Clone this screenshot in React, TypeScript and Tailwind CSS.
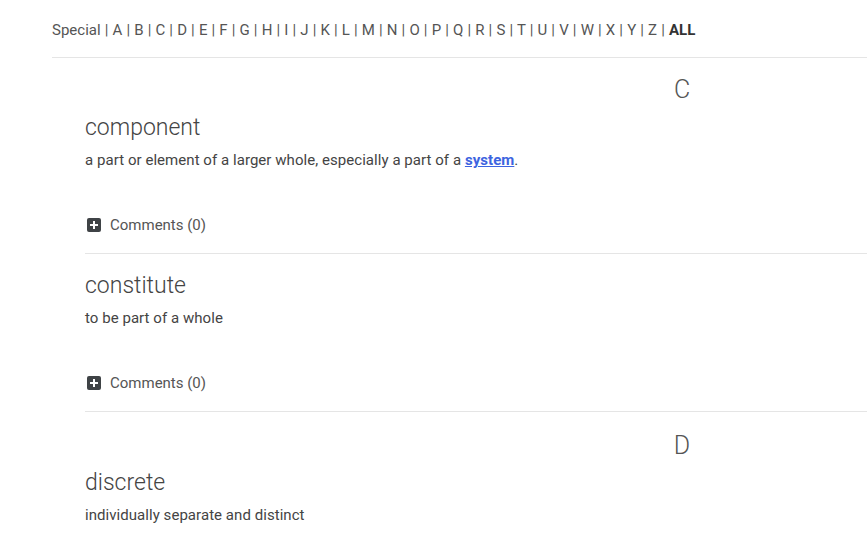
import { ReactNode } from 'react';

const letters = 'ABCDEFGHIJKLMNOPQRSTUVWXYZ'.split('');

function PlusBox() {
  return (
    <svg width="14" height="14" viewBox="0 0 14 14" className="shrink-0">
      <rect x="0" y="0" width="14" height="14" rx="2" fill="#3f4346" />
      <rect x="6" y="3" width="2" height="8" fill="#fff" />
      <rect x="3" y="6" width="8" height="2" fill="#fff" />
    </svg>
  );
}

function LetterHeading({ letter, pad }: { letter: string; pad: string }) {
  return (
    <div className={`${pad} text-center text-[25px] leading-[28px] font-light text-[#555]`}>
      {letter}
    </div>
  );
}

function Entry({ word, children, last, top }: { word: string; children: ReactNode; last?: boolean; top: string }) {
  return (
    <div className={last ? '' : 'border-b border-[#e5e5e5]'}>
      <h3 className={`${top} text-[23px] leading-[26px] font-light text-[#444]`}>{word}</h3>
      <p className="mt-[9px] text-[15px] leading-[20px] text-[#444] tracking-[0.05px]">{children}</p>
      {!last && (
        <div className="mt-[45px] mb-[18px] flex items-center gap-[9px] pl-[2px] text-[15px] leading-[20px] text-[#555]">
          <PlusBox />
          <span>Comments (0)</span>
        </div>
      )}
    </div>
  );
}

export default function App() {
  return (
    <div className="w-full h-[538px] overflow-hidden bg-white font-['Roboto',sans-serif]">
      <div className="w-[1260px] ml-[52px]">
        {/* Alphabet nav */}
        <div className="pt-[20px] pb-[17px] text-[15px] leading-[20px] text-[#555] border-b border-[#e5e5e5] [word-spacing:0.4px]">
          <span>Special</span>
          {letters.map((l) => (
            <span key={l}> | {l}</span>
          ))}
          <span> | </span>
          <span className="font-bold text-[#333]">ALL</span>
        </div>

        <div className="pl-[33px]">
          <div className="-ml-[33px]">
            <LetterHeading letter="C" pad="pt-[18px]" />
          </div>
          <Entry word="component" top="mt-[11px]">
            a part or element of a larger whole, especially a part of a{' '}
            <a href="#" className="font-bold text-[#3d64e0] underline">system</a>.
          </Entry>
          <Entry word="constitute" top="mt-[19px]">to be part of a whole</Entry>
          <div className="-ml-[33px]">
            <LetterHeading letter="D" pad="pt-[20px]" />
          </div>
          <Entry word="discrete" top="mt-[10px]" last>
            individually separate and distinct
          </Entry>
        </div>
      </div>
    </div>
  );
}
